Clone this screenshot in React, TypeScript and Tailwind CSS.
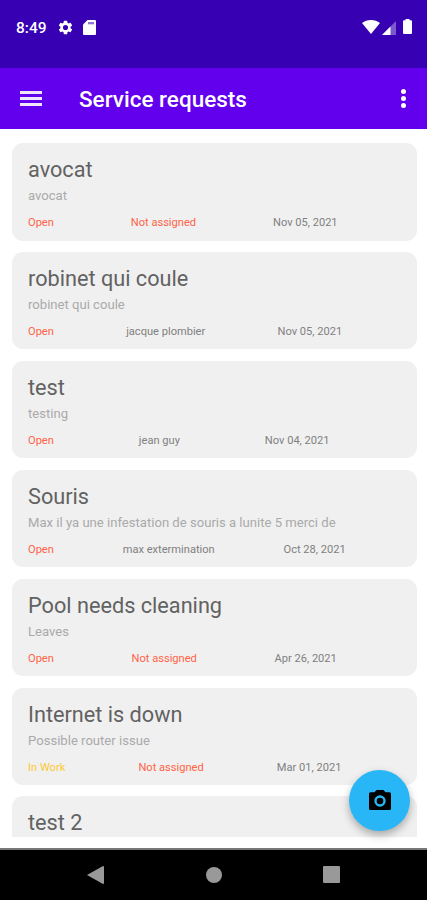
type Request = {
  title: string;
  description?: string;
  status?: "Open" | "In Work";
  assignee?: string;
  date?: string;
};

const requests: Request[] = [
  { title: "avocat", description: "avocat", status: "Open", date: "Nov 05, 2021" },
  {
    title: "robinet qui coule",
    description: "robinet qui coule",
    status: "Open",
    assignee: "jacque plombier",
    date: "Nov 05, 2021",
  },
  {
    title: "test",
    description: "testing",
    status: "Open",
    assignee: "jean guy",
    date: "Nov 04, 2021",
  },
  {
    title: "Souris",
    description: "Max il ya une infestation de souris a lunite 5 merci de",
    status: "Open",
    assignee: "max extermination",
    date: "Oct 28, 2021",
  },
  { title: "Pool needs cleaning", description: "Leaves", status: "Open", date: "Apr 26, 2021" },
  {
    title: "Internet is down",
    description: "Possible router issue",
    status: "In Work",
    date: "Mar 01, 2021",
  },
  { title: "test 2" },
];

function StatusBar() {
  return (
    <div className="h-[68px] shrink-0 bg-[#3700b3] flex items-start pt-[17px] pl-4 pr-[15px] text-white">
      <span className="text-[15.5px] leading-[22px] font-medium w-[31px] whitespace-nowrap">8:49</span>
      <svg viewBox="0 0 24 24" className="w-[17px] h-[17px] ml-[10px] mt-[2px]" fill="currentColor">
        <path d="M19.14 12.94c.04-.3.06-.61.06-.94 0-.32-.02-.64-.07-.94l2.03-1.58a.49.49 0 0 0 .12-.61l-1.92-3.32a.49.49 0 0 0-.59-.22l-2.39.96c-.5-.38-1.03-.7-1.62-.94l-.36-2.54a.48.48 0 0 0-.48-.41h-3.84a.47.47 0 0 0-.47.41l-.36 2.54c-.59.24-1.13.57-1.62.94l-2.39-.96a.48.48 0 0 0-.59.22L2.74 8.87a.47.47 0 0 0 .12.61l2.03 1.58c-.05.3-.09.63-.09.94s.02.64.07.94l-2.03 1.58a.49.49 0 0 0-.12.61l1.92 3.32c.12.22.37.29.59.22l2.39-.96c.5.38 1.03.7 1.62.94l.36 2.54c.05.24.24.41.48.41h3.84c.24 0 .44-.17.47-.41l.36-2.54c.59-.24 1.13-.56 1.62-.94l2.39.96c.22.08.47 0 .59-.22l1.92-3.32a.47.47 0 0 0-.12-.61zM12 15.6a3.6 3.6 0 1 1 0-7.2 3.6 3.6 0 0 1 0 7.2z" />
      </svg>
      <svg viewBox="0 0 13 15" className="w-[13px] h-[15px] ml-[9px] mt-[3px]">
        <path d="M4.5 0H12a1 1 0 0 1 1 1v13a1 1 0 0 1-1 1H1a1 1 0 0 1-1-1V4.5z" fill="#fff" />
        <path d="M5 2h6v2.3H5z" fill="#3700b3" opacity=".55" />
      </svg>
      <svg viewBox="0 0 18 14" className="w-[18px] h-[14px] ml-auto mt-[3px]" fill="currentColor">
        <path d="M9 14 0 3C2.6 1 5.6 0 9 0s6.4 1 9 3z" />
      </svg>
      <svg viewBox="0 0 14 14" className="w-[14px] h-[14px] ml-[2px] mt-[4px]" fill="currentColor">
        <path d="M14 0v14H0z" opacity=".35" />
        <path d="M8.5 5.5V14H0z" />
      </svg>
      <svg viewBox="0 0 9 15" className="w-[9px] h-[15px] ml-[7px] mt-[2px]" fill="currentColor">
        <path d="M2.5 0h4v1.3H8a1 1 0 0 1 1 1V14a1 1 0 0 1-1 1H1a1 1 0 0 1-1-1V2.3a1 1 0 0 1 1-1h1.5z" />
      </svg>
    </div>
  );
}

function AppBar() {
  return (
    <div className="h-[60.5px] shrink-0 bg-[#6200ee] flex items-center pl-5 pr-[21px] text-white">
      <div className="w-[22px] flex flex-col gap-[3px] opacity-90">
        <span className="h-[3px] bg-white" />
        <span className="h-[3px] bg-white" />
        <span className="h-[3px] bg-white" />
      </div>
      <h1 className="ml-[37px] mt-[2px] text-[22.5px] leading-7 font-medium whitespace-nowrap">
        Service requests
      </h1>
      <div className="ml-auto flex flex-col gap-[2px]">
        <span className="w-[5px] h-[5px] rounded-full bg-white" />
        <span className="w-[5px] h-[5px] rounded-full bg-white" />
        <span className="w-[5px] h-[5px] rounded-full bg-white" />
      </div>
    </div>
  );
}

function RequestCard({ request }: { request: Request }) {
  const { title, description, status, assignee, date } = request;
  return (
    <div className="h-[97.5px] shrink-0 rounded-[11px] bg-[#f0f0f0] pl-4 pt-[13px] whitespace-nowrap">
      <h2 className="text-[21.7px] leading-[28px] text-[#626262]">{title}</h2>
      {description && (
        <p className="mt-[3px] text-[13.1px] leading-[18px] text-[#aaa]">{description}</p>
      )}
      {status && (
        <div className="mt-[10px] pr-[2px] flex justify-between text-[11.1px] leading-4 text-[#808080]">
          <span className={status === "Open" ? "text-[#ff6347]" : "text-[#ffc830]"}>{status}</span>
          <span className={assignee ? "" : "text-[#ff6347]"}>{assignee ?? "Not assigned"}</span>
          <span>{date}</span>
          <span />
        </div>
      )}
    </div>
  );
}

function NavigationBar() {
  return (
    <div className="h-[52px] shrink-0 bg-black border-t-2 border-[#777] flex items-center justify-between px-[87px] pb-px">
      <svg viewBox="0 0 17 18" className="w-[17px] h-[18px]" fill="#999">
        <path d="M16 0q1 0 1 1v16q0 1-1 1L0 9z" />
      </svg>
      <span className="w-4 h-4 rounded-full bg-[#999]" />
      <span className="w-[17px] h-[17px] rounded-[1px] bg-[#999]" />
    </div>
  );
}

export default function App() {
  return (
    <div className="relative w-[427px] h-[900px] flex flex-col overflow-hidden bg-white font-['Roboto',sans-serif]">
      <StatusBar />
      <AppBar />
      <div className="h-[708.5px] shrink-0 pl-[12px] pr-[10.5px] pt-[14.5px] flex flex-col gap-[11.42px] overflow-hidden">
        {requests.map((request) => (
          <RequestCard key={request.title} request={request} />
        ))}
      </div>
      <div className="flex-1" />
      <NavigationBar />

      {/* camera button */}
      <button className="absolute left-[349px] top-[770px] w-[61px] h-[61px] rounded-full bg-[#29b6f6] shadow-[0_4px_8px_rgba(0,0,0,0.3)] flex items-center justify-center">
        <svg viewBox="0 0 22 20" className="w-[22px] h-[20px] mb-[2px]" fill="#000">
          <path
            fillRule="evenodd"
            d="M7.5 0h7l2 2.2H20.5a1.5 1.5 0 0 1 1.5 1.500V18.5a1.5 1.5 0 0 1-1.5 1.5H1.5a1.5 1.5 0 0 1-1.5-1.5V3.7a1.5 1.5 0 0 1 1.5-1.500h4zM11 5.3a5.7 5.7 0 1 0 0 11.4 5.7 5.7 0 0 0 0-11.4z"
          />
          <circle cx="11" cy="11" r="3.3" />
        </svg>
      </button>
    </div>
  );
}
